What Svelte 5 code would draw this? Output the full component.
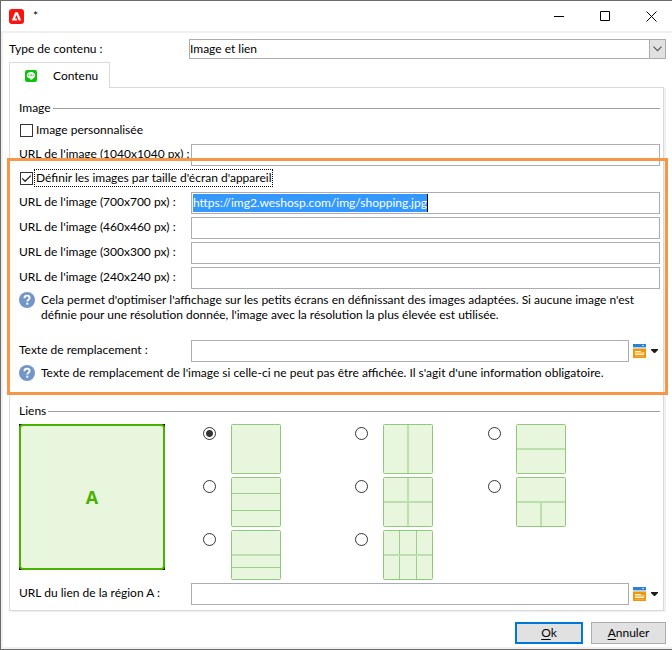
<script>
  let contentType = $state('Image et lien');
  let customImage = $state(false);
  let perDevice = $state(true);
  let layout = $state('single');
  let altText = $state('');
  let linkUrl = $state('');
  let baseUrl = $state('');

  let sizes = $state([
    { size: 700, url: 'https://img2.weshosp.com/img/shopping.jpg' },
    { size: 460, url: '' },
    { size: 300, url: '' },
    { size: 240, url: '' }
  ]);

  // Each line is [x, y, width, height] of a divider inside a 50px tile.
  const layouts = [
    { id: 'single', name: 'Une région', lines: [] },
    { id: 'columns', name: 'Deux colonnes', lines: [[24, 1, 2, 48]] },
    { id: 'rows', name: 'Deux lignes', lines: [[1, 24, 48, 2]] },
    { id: 'three-rows', name: 'Trois lignes', lines: [[1, 16, 48, 1], [1, 33, 48, 1]] },
    { id: 'quarters', name: 'Quatre régions', lines: [[24, 1, 2, 48], [1, 24, 48, 2]] },
    { id: 'one-two', name: 'Une et deux régions', lines: [[1, 24, 48, 2], [24, 26, 2, 23]] },
    { id: 'half-rows', name: 'Une grande et deux petites lignes', lines: [[1, 24, 48, 2], [1, 37, 48, 1]] },
    { id: 'six', name: 'Six régions', lines: [[16, 1, 1, 48], [33, 1, 1, 48], [1, 24, 48, 2]] }
  ];
</script>

{#snippet help()}
  <svg class="help-icon" width="16" height="16" viewBox="0 0 16 16" aria-hidden="true">
    <circle cx="8" cy="8" r="8" fill="#7396c8" />
    <path d="M5.4 6.2C5.4 4.6 6.5 3.7 8 3.7s2.6.9 2.6 2.2c0 1.7-2.3 1.8-2.3 3.6" fill="none" stroke="#fff" stroke-width="1.8" />
    <rect x="7.3" y="10.7" width="2" height="2" fill="#fff" />
  </svg>
{/snippet}

{#snippet picker(name)}
  <button class="picker" type="button" aria-label={name}>
    <svg width="26" height="14" viewBox="0 0 26 14" aria-hidden="true">
      <rect width="13" height="3" fill="#2b82d4" />
      <rect x="9" y="1" width="2" height="1" fill="#b9dcf7" />
      <rect y="3" width="13" height="1" fill="#b5d3ee" />
      <rect y="4" width="13" height="1" fill="#e0c79c" />
      <rect y="5" width="13" height="9" fill="#f09609" />
      <path d="M2 7.5h6M2 9h9.500M2 10.500h9" stroke="#fff3dc" />
      <path d="M2 12.5h9" stroke="#f5ab3c" />
      <path d="M18 5h7v1l-3 3h-1l-3-3z" fill="#1c1c1c" />
    </svg>
  </button>
{/snippet}

<div class="window">
  <header class="titlebar">
    <svg class="logo" width="15" height="15" viewBox="0 0 15 15" aria-hidden="true">
      <rect width="15" height="15" rx="3" fill="#fa1410" />
      <path d="M6.2 3.2h2.6l3.4 8.2H9.8L7.5 6.1 6 9.6h1.7l.7 1.8H2.8z" fill="#fff" />
    </svg>
    <span class="title">*</span>
    <button type="button" class="control" aria-label="Réduire">
      <svg width="11" height="11" viewBox="0 0 11 11"><path d="M0 5.5h10" stroke="#000" /></svg>
    </button>
    <button type="button" class="control" aria-label="Agrandir">
      <svg width="11" height="11" viewBox="0 0 11 11"><path d="M.5.5h9v9h-9z" fill="none" stroke="#000" /></svg>
    </button>
    <button type="button" class="control" aria-label="Fermer">
      <svg width="11" height="11" viewBox="0 0 11 11"><path d="M.5.5l10 10M10.5.5l-10 10" stroke="#000" /></svg>
    </button>
  </header>

  <form class="body" onsubmit={(e) => e.preventDefault()}>
    <div class="type-row">
      <label for="type">Type de contenu :</label>
      <div class="combo">
        <select id="type" bind:value={contentType}>
          <option>Image et lien</option>
        </select>
        <span class="combo-arrow">
          <svg width="9" height="6" viewBox="0 0 9 6" aria-hidden="true"><path d="M.5.7l4 4 4-4" fill="none" stroke="#555" stroke-width="1.2" /></svg>
        </span>
      </div>
    </div>

    <div class="tabs" role="tablist">
      <button class="tab" type="button" role="tab" aria-selected="true">
        <svg width="12" height="12" viewBox="0 0 12 12" aria-hidden="true">
          <rect width="12" height="12" rx="2" fill="#0bc30b" />
          <path d="M6 2C3.600 2 1.800 3.500 1.800 5.300c0 1.700 1.400 2.900 3.400 3.200.5.1.4.500.3 1.500C7.500 9.200 10.200 7.500 10.200 5.300 10.200 3.500 8.400 2 6 2z" fill="#fff" />
          <path d="M3.500 4.500v1.500h1M5.500 4.500v1.500M6.500 6V4.500l1 1.500M8.500 4.500v1.500" fill="none" stroke="#0bc30b" stroke-width=".6" />
        </svg>
        <span>Contenu</span>
      </button>
    </div>

    <div class="panel" role="tabpanel">
      <fieldset>
        <legend><span>Image</span></legend>
        <label class="check custom">
          <input type="checkbox" bind:checked={customImage} />
          <span>Image personnalisée</span>
        </label>
        <div class="field">
          <label for="url-base">URL de l'image (1040x1040 px) :</label>
          <input id="url-base" class="box" type="text" bind:value={baseUrl} />
        </div>

        <div class="device">
          <label class="check">
            <input type="checkbox" bind:checked={perDevice} />
            <span class="focused">Définir les images par taille d'écran d'appareil</span>
          </label>
          <div class="sizes">
            {#each sizes as item (item.size)}
              <div class="field">
                <label for="url-{item.size}">URL de l'image ({item.size}x{item.size} px) :</label>
                {#if item.url}
                  <div class="box">
                    <input id="url-{item.size}" class="selected" type="text" bind:value={item.url} />
                  </div>
                {:else}
                  <input id="url-{item.size}" class="box" type="text" />
                {/if}
              </div>
            {/each}
          </div>
          <div class="help">
            {@render help()}
            <p>Cela permet d'optimiser l'affichage sur les petits écrans en définissant des images adaptées. Si aucune image n'est définie pour une résolution donnée, l'image avec la résolution la plus élevée est utilisée.</p>
          </div>
          <div class="field alt">
            <label for="alt">Texte de remplacement :</label>
            <input id="alt" class="box" type="text" bind:value={altText} />
            {@render picker('Insérer un champ dans le texte')}
          </div>
          <div class="help">
            {@render help()}
            <p>Texte de remplacement de l'image si celle-ci ne peut pas être affichée. Il s'agit d'une information obligatoire.</p>
          </div>
        </div>
      </fieldset>

      <fieldset class="links">
        <legend><span>Liens</span></legend>
        <div class="regions">
          <div class="preview"><div class="region">A</div></div>
          <div class="choices">
            {#each layouts as item (item.id)}
              <label class="choice">
                <input type="radio" name="layout" value={item.id} bind:group={layout} aria-label={item.name} />
                <svg width="50" height="50" viewBox="0 0 50 50" aria-hidden="true">
                  <rect x=".5" y=".5" width="49" height="49" rx="1" fill="#e8f6de" stroke="#90c97c" />
                  {#each item.lines as [x, y, w, h]}
                    <rect {x} {y} width={w} height={h} fill={w === 1 || h === 1 ? '#9bd08a' : '#bbdfad'} />
                  {/each}
                </svg>
              </label>
            {/each}
          </div>
        </div>
        <div class="field">
          <label for="link">URL du lien de la région A :</label>
          <input id="link" class="box" type="text" bind:value={linkUrl} />
          {@render picker("Insérer un champ dans l'URL")}
        </div>
      </fieldset>
    </div>

    <footer>
      <button class="action ok" type="submit"><u>O</u>k</button>
      <button class="action" type="button"><u>A</u>nnuler</button>
    </footer>
  </form>
</div>

<style>
  :global(body) {
    background: #fff;
  }

  .window,
  .window * {
    box-sizing: border-box;
  }

  .window {
    border: solid #6b6b6b;
    border-width: 1px 0 1px 1px;
    background: #fff;
    color: #000;
    font: 12px/16px Lato, "Open Sans", sans-serif;
  }

  button,
  input,
  select {
    margin: 0;
    padding: 0;
    border: 0;
    border-radius: 0;
    outline: 0;
    color: inherit;
    font: inherit;
  }

  svg {
    display: block;
    flex: none;
  }

  .titlebar {
    display: flex;
    align-items: center;
    gap: 4px;
    height: 30px;
    padding-left: 8px;
  }

  .title {
    flex: 1;
    padding-left: 5px;
  }

  .control {
    display: grid;
    place-items: center;
    width: 42px;
    height: 30px;
    background: none;
  }

  .body {
    padding: 6px 6px 3px;
    border: solid #f0f0f0;
    border-width: 2px 0 2px 2px;
  }

  .type-row {
    display: flex;
    align-items: center;
  }

  .type-row label {
    flex: none;
    width: 180px;
  }

  .combo {
    display: flex;
    flex: 1;
    position: relative;
  }

  select {
    flex: 1;
    height: 20px;
    border: 1px solid #ababab;
    background: #fff;
    appearance: none;
  }

  .combo-arrow {
    display: grid;
    place-items: center;
    position: absolute;
    top: 0;
    right: 0;
    width: 17px;
    height: 20px;
    border: 1px solid #ababab;
    background: #e1e1e1;
    pointer-events: none;
  }

  .tabs {
    display: flex;
    margin-top: 3px;
  }

  .tab {
    display: flex;
    align-items: center;
    gap: 16px;
    position: relative;
    z-index: 1;
    height: 26px;
    margin-bottom: -1px;
    padding: 0 11px 0 15px;
    border: 1px solid #d9d9d9;
    border-bottom: 0;
    background: #fff;
  }

  .panel {
    margin-right: 2px;
    padding: 12px 3px 5px 9px;
    border: 1px solid #d9d9d9;
    box-shadow: 2px 1px 0 #f0f0f0;
  }

  fieldset {
    min-width: 0;
    margin: 0;
    padding: 0;
    border: 0;
  }

  legend {
    display: flex;
    align-items: center;
    gap: 2px;
    width: 100%;
    padding: 0;
  }

  legend::after {
    content: "";
    flex: 1;
    height: 1px;
    background: #a0a0a0;
  }

  .check {
    display: flex;
    align-items: center;
    gap: 2px;
    width: fit-content;
    height: 16px;
  }

  .check.custom {
    margin: 6px 0;
  }

  .check input {
    flex: none;
    width: 13px;
    height: 13px;
    margin-left: 1px;
    border: 1px solid #333;
    background: #fff;
    appearance: none;
  }

  .check input:checked {
    background: #fff url("data:image/svg+xml,%3Csvg xmlns='http://www.w3.org/2000/svg' viewBox='0 0 11 11'%3E%3Cpath d='M1.200 5.400l2.900 2.900 5.700-5.700' fill='none' stroke='%23222' stroke-width='1.300'/%3E%3C/svg%3E");
  }

  .check span {
    padding: 0 1px;
  }

  .focused {
    outline: 1px dotted #000;
  }

  .field {
    display: flex;
    align-items: center;
  }

  .field > label {
    flex: none;
    width: 172px;
    padding-bottom: 2px;
    white-space: nowrap;
  }

  .box {
    flex: 1;
    min-width: 0;
    height: 22px;
    padding: 1px;
    border: 1px solid #abadb3;
    background: #fff;
  }

  .selected {
    display: block;
    height: 18px;
    padding-bottom: 2px;
    field-sizing: content;
    border-right: 1px solid #000;
    background: #39f;
    color: #fff;
  }

  .device {
    position: relative;
    margin-top: 4px;
  }

  .device::after {
    content: "";
    position: absolute;
    inset: -12px -8px -14px -12px;
    border: 3px solid #f79646;
    pointer-events: none;
  }

  .sizes {
    display: flex;
    flex-direction: column;
    gap: 3px;
    margin-top: 6px;
  }

  .help {
    display: flex;
    gap: 6px;
    margin-top: 3px;
    line-height: 15px;
  }

  .help p {
    margin: 0;
  }

  .alt {
    margin-top: 18px;
  }

  .picker {
    margin-left: 4px;
    margin-right: 1px;
    background: none;
  }

  .links {
    margin-top: 22px;
  }

  .regions {
    display: flex;
    align-items: flex-start;
    gap: 38px;
    margin: 5px 0 3px;
  }

  .preview {
    width: 146px;
    background: #000;
  }

  .region {
    display: grid;
    place-items: center;
    height: 146px;
    border: 2px solid #4bb100;
    border-radius: 4px;
    background: #e8f6de;
    color: #4bb100;
    font: bold 18px/24px "Open Sans", "Noto Sans", sans-serif;
  }

  .choices {
    display: grid;
    grid-template-columns: 152px 133px auto;
    gap: 3px 0;
  }

  .choice {
    display: flex;
    gap: 15px;
  }

  .choice input {
    width: 13px;
    height: 13px;
    margin-top: 3px;
    border: 1px solid #333;
    border-radius: 50%;
    background: #fff;
    appearance: none;
  }

  .choice input:checked {
    background: radial-gradient(circle, #333 3px, #fff 4px);
  }

  footer {
    display: flex;
    justify-content: flex-end;
    gap: 8px;
    margin-top: 11px;
  }

  .action {
    width: 75px;
    height: 22px;
    border: 1px solid #adadad;
    background: #e1e1e1;
  }

  .ok {
    width: 68px;
    border: 2px solid #0078d7;
  }

  u {
    text-underline-offset: 2px;
  }
</style>
